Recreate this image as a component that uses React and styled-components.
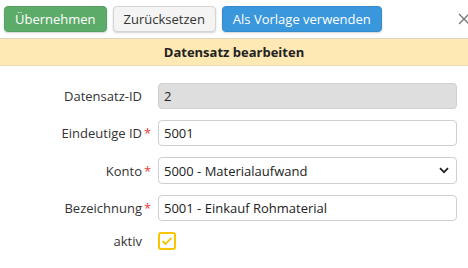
import React from 'react';
import styled, { createGlobalStyle } from 'styled-components';

const GlobalStyle = createGlobalStyle`
  html, body {
    margin: 0;
    padding: 0;
    background: #fff;
    overflow: hidden;
  }
  body {
    font-family: 'Open Sans', 'Noto Sans', sans-serif;
    font-size: 13px;
    color: #333;
  }
`;

const Page = styled.div`
  width: 468px;
  height: 268px;
  overflow: hidden;
`;

const Toolbar = styled.div`
  display: flex;
  align-items: center;
  gap: 6px;
  height: 38px;
  padding: 0 4px;
  box-sizing: border-box;
  padding-bottom: 1px;
`;

const variants = {
  green: { bg: '#5cab69', border: '#55a062', color: '#fff' },
  plain: { bg: '#f4f4f4', border: '#d4d4d4', color: '#333' },
  blue: { bg: '#3a97dc', border: '#348bcc', color: '#fff' },
};

const Button = styled.button`
  height: 26px;
  padding: 0 10px;
  border-radius: 4px;
  border: 1px solid ${(p) => variants[p.$variant].border};
  background: ${(p) => variants[p.$variant].bg};
  color: ${(p) => variants[p.$variant].color};
  font-family: inherit;
  font-size: 13px;
  line-height: 24px;
  box-shadow: 0 1px 2px rgba(0, 0, 0, 0.18);
  cursor: pointer;
  white-space: nowrap;
`;

const Close = styled.button`
  margin-left: auto;
  margin-right: -8px;
  padding: 0;
  border: none;
  background: none;
  width: 16px;
  height: 16px;
  display: flex;
  align-items: center;
  justify-content: center;
  cursor: pointer;
`;

const Header = styled.div`
  height: 26px;
  line-height: 26px;
  background: #fee8b4;
  border-top: 1px solid #dcd6c6;
  border-bottom: 1px solid #eedcae;
  text-align: center;
  font-weight: 700;
  color: #222;
`;

const Form = styled.div`
  display: grid;
  grid-template-columns: 142px 16px 299px;
  row-gap: 11px;
  padding-top: 17px;
  align-items: center;
`;

const Label = styled.label`
  text-align: right;
  color: #333;
`;

const Star = styled.span`
  color: #e53b3b;
  padding-left: 2px;
  font-size: 13px;
`;

const Input = styled.input`
  box-sizing: border-box;
  width: 100%;
  height: 26px;
  margin: 0;
  padding: 0 5px;
  border: 1px solid #cfcfcf;
  border-radius: 4px;
  background: ${(p) => (p.disabled ? '#dedede' : '#fff')};
  color: #222;
  font-family: inherit;
  font-size: 13px;
  outline: none;
`;

const SelectWrap = styled.div`
  position: relative;
`;

const Select = styled.select`
  box-sizing: border-box;
  width: 100%;
  height: 27px;
  margin: 0;
  padding: 0 5px;
  border: 1px solid #cfcfcf;
  border-radius: 4px;
  background: #fff;
  color: #222;
  font-family: inherit;
  font-size: 13px;
  appearance: none;
  outline: none;
`;

const Chevron = styled.svg`
  position: absolute;
  right: 8px;
  top: 10px;
  pointer-events: none;
`;

const Check = styled.div`
  width: 18px;
  height: 18px;
  box-sizing: border-box;
  border: 2px solid #f7c600;
  border-radius: 3px;
  display: flex;
  align-items: center;
  justify-content: center;
`;

const fields = [
  { label: 'Datensatz-ID', value: '2', disabled: true },
  { label: 'Eindeutige ID', value: '5001', required: true },
  { label: 'Konto', value: '5000 - Materialaufwand', required: true, select: true },
  { label: 'Bezeichnung', value: '5001 - Einkauf Rohmaterial', required: true },
];

const App = () => {
  return (
    <Page>
      <GlobalStyle />
      <Toolbar>
        <Button $variant="green">Übernehmen</Button>
        <Button $variant="plain">Zurücksetzen</Button>
        <Button $variant="blue">Als Vorlage verwenden</Button>
        <Close aria-label="close">
          <svg width="12" height="12" viewBox="0 0 12 12">
            <path d="M1 1 L11 11 M11 1 L1 11" stroke="#777" strokeWidth="1.3" fill="none" />
          </svg>
        </Close>
      </Toolbar>
      <Header>Datensatz bearbeiten</Header>
      <Form>
        {fields.map((f) => (
          <React.Fragment key={f.label}>
            <Label>{f.label}</Label>
            <Star>{f.required ? '*' : ''}</Star>
            {f.select ? (
              <SelectWrap>
                <Select defaultValue={f.value}>
                  <option>{f.value}</option>
                </Select>
                <Chevron width="10" height="7" viewBox="0 0 10 7">
                  <path d="M1 1.2 L5 5.2 L9 1.2" stroke="#222" strokeWidth="1.8" fill="none" />
                </Chevron>
              </SelectWrap>
            ) : (
              <Input defaultValue={f.value} disabled={f.disabled} />
            )}
          </React.Fragment>
        ))}
        <Label>aktiv</Label>
        <Star />
        <Check>
          <svg width="12" height="10" viewBox="0 0 12 10">
            <path d="M1.5 5 L4.5 8 L10.5 1.8" stroke="#f7c600" strokeWidth="1.8" fill="none" />
          </svg>
        </Check>
      </Form>
    </Page>
  );
};

export default App;
